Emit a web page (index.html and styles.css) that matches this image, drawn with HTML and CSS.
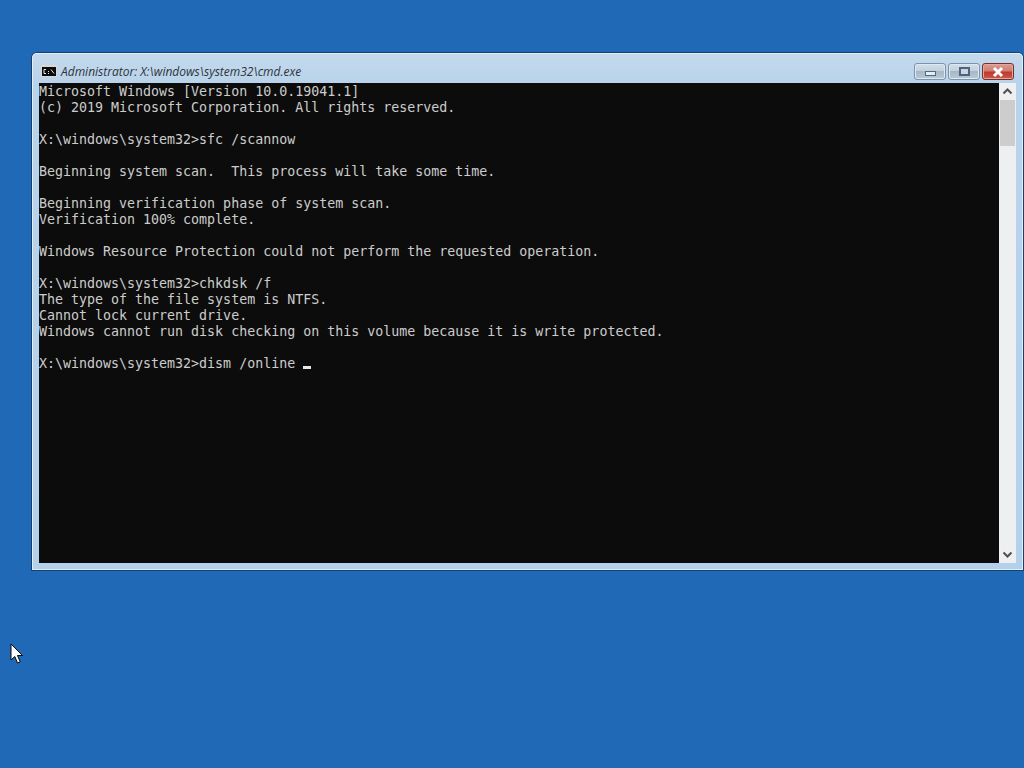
FILE: index.html
```html
<!DOCTYPE html>
<html lang="en">
<head>
<meta charset="utf-8">
<title>cmd.exe</title>
<link rel="stylesheet" href="styles.css">
</head>
<body>
<div class="desktop">
  <section class="window">
    <header class="titlebar">
      <svg class="app-icon" width="16" height="12" viewBox="0 0 16 12">
        <rect width="16" height="12" fill="#d8d8d8"/>
        <rect x="1" y="2" width="14" height="9" fill="#0c0c0c"/>
        <path d="M5 4.500H3V8.500H5M7 6.500H8M7 8.500H8M10 4.500L13 8.500" fill="none" stroke="#e8e8e8" stroke-width="1"/>
      </svg>
      <span class="title">Administrator: X:\windows\system32\cmd.exe</span>
      <div class="controls">
        <button class="ctl"><span class="glyph-min"></span></button>
        <button class="ctl"><span class="glyph-max"></span></button>
        <button class="ctl close">
          <svg width="14" height="12" viewBox="0 0 14 12"><path d="M3 2L11 10M11 2L3 10" stroke="#fff" stroke-width="3"/></svg>
        </button>
      </div>
    </header>
    <div class="client">
<pre class="console">Microsoft Windows [Version 10.0.19041.1]
(c) 2019 Microsoft Corporation. All rights reserved.

X:\windows\system32&gt;sfc /scannow

Beginning system scan.  This process will take some time.

Beginning verification phase of system scan.
Verification 100% complete.

Windows Resource Protection could not perform the requested operation.

X:\windows\system32&gt;chkdsk /f
The type of the file system is NTFS.
Cannot lock current drive.
Windows cannot run disk checking on this volume because it is write protected.

X:\windows\system32&gt;dism /online <span class="caret"></span></pre>
      <div class="scrollbar">
        <svg class="arrow" width="17" height="17" viewBox="0 0 17 17"><path d="M4.500 10.500L8.500 6.500L12.500 10.500" fill="none" stroke="#505050" stroke-width="2"/></svg>
        <div class="track"><div class="thumb"></div></div>
        <svg class="arrow" width="17" height="17" viewBox="0 0 17 17"><path d="M4.500 6.500L8.500 10.500L12.500 6.500" fill="none" stroke="#505050" stroke-width="2"/></svg>
      </div>
    </div>
  </section>
  <svg class="pointer" width="14" height="22" viewBox="0 0 14 22">
    <path d="M1 1V17L4.800 13.500L7.500 20L10.200 18.800L7.500 12.500H12.500Z" fill="#fff" stroke="#0a0a0a" stroke-width="1"/>
  </svg>
</div>
</body>
</html>
```
FILE: styles.css
```css
* { box-sizing: border-box; }
html, body { margin: 0; height: 100%; }
body { background: #1f69b6; overflow: hidden; }
.desktop { position: relative; width: 1024px; height: 768px; background: #1f69b6; }
.window {
  position: absolute;
  left: 32px;
  top: 53px;
  width: 991px;
  height: 517px;
  display: flex;
  flex-direction: column;
  padding: 0 7px 7px 7px;
  background: linear-gradient(180deg, #c4d9ec 0, #b9d3ea 30px, #b4d1ec 100%);
  border-radius: 5px 5px 0 0;
  box-shadow: inset 0 0 0 1px #e4eef6, 0 0 0 1px #16406f;
}
.titlebar { height: 30px; display: flex; align-items: center; padding-left: 2px; padding-top: 6px; flex: none; }
.app-icon { flex: none; margin-right: 4px; }
.title {
  font: italic 12px "Open Sans", "Liberation Sans", sans-serif;
  color: #2c343d;
  white-space: nowrap;
}
.controls { margin-left: auto; display: flex; gap: 2px; align-self: flex-start; margin-top: 4px; margin-right: 2px; }
.ctl {
  width: 32px;
  height: 17px;
  padding: 0;
  border: 1px solid #7f93a8;
  border-radius: 3px;
  background: linear-gradient(180deg, #d3dfe9 0, #c3d1de 45%, #a6b7c6 50%, #b9c9d8 100%);
  display: flex;
  align-items: center;
  justify-content: center;
  box-shadow: inset 0 0 0 1px #dce8f2;
}
.close { border-color: #7a2e2c; background: linear-gradient(180deg, #dc9c92 0, #cf7f72 45%, #bd3a30 55%, #cc5a4c 100%); box-shadow: inset 0 0 0 1px #e3a89e; }
.glyph-min { display: block; width: 11px; height: 5px; margin-top: 3px; background: #e6eef5; border: 1px solid #56697c; }
.glyph-max { display: block; width: 11px; height: 9px; background: #c8d6e2; border: 2px solid #50637a; }
.client { flex: 1; display: flex; min-height: 0; }
.console {
  flex: 1;
  margin: 0;
  padding-top: 1px;
  background: #0c0c0c;
  color: #cccccc;
  font: 13.3px/16px "DejaVu Sans Mono", "Liberation Mono", monospace;
  overflow: hidden;
}
.caret { display: inline-block; width: 8px; height: 3px; background: #e8e8e8; vertical-align: -1px; }
.scrollbar { width: 17px; flex: none; display: flex; flex-direction: column; background: #eeeff0; }
.arrow { flex: none; display: block; }
.track { flex: 1; }
.thumb { height: 46px; width: 15px; margin-left: 1px; background: #cdcdcd; }
.pointer { position: absolute; left: 10px; top: 643px; }
```
